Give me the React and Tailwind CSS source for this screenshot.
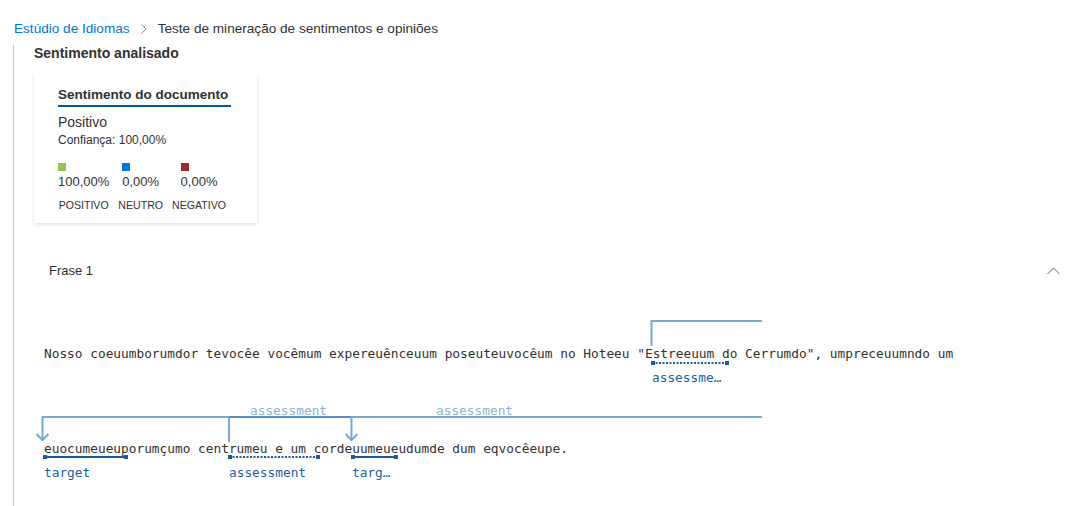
import React from 'react';

const ui = { fontFamily: '"Segoe UI", "Liberation Sans", Arial, sans-serif' };
const mono = { fontFamily: '"DejaVu Sans Mono", "Liberation Mono", monospace' };

// underline with small square caps at both ends
const Mark = ({ x1, x2, y, dotted }) => (
  <g>
    <line
      x1={x1}
      x2={x2}
      y1={y}
      y2={y}
      stroke="#1c5a9c"
      strokeWidth="2"
      strokeDasharray={dotted ? '2 1.5' : undefined}
    />
    <rect x={x1 - 1} y={y - 2} width="4" height="4" fill="#1c5a9c" />
    <rect x={x2 - 3} y={y - 2} width="4" height="4" fill="#1c5a9c" />
  </g>
);

const Arrow = ({ x, y1, y2 }) => (
  <g stroke="#7aa6d2" strokeWidth="2" fill="none">
    <line x1={x} x2={x} y1={y1} y2={y2} />
    <polyline points={`${x - 6},${y2 - 6} ${x},${y2} ${x + 6},${y2 - 6}`} />
  </g>
);

const Legend = ({ color, value, label }) => (
  <div className="flex flex-col items-center">
    <div className="flex flex-col">
      <span className={`w-2 h-2 ${color}`} />
      <span className="text-[13px] leading-5 mt-[1px] text-[#323130]">{value}</span>
    </div>
    <span className="text-[10.6px] leading-4 mt-[5px] text-[#323130]">{label}</span>
  </div>
);

const Diagram = () => (
  <div className="relative mt-[19px] h-[206px]" style={mono}>
    <div className="pl-[10px] pt-[46px] text-[12.8px] leading-4 text-[#323130] whitespace-pre">
      Nosso coeuumborumdor tevocêe vocêmum expereuênceuum poseuteuvocêum no Hoteeu "Estreeuum do Cerrumdo", umpreceuumndo um
    </div>
    <div className="pl-[10px] mt-[79px] text-[12.8px] leading-4 text-[#323130] whitespace-pre">
      euocumeueuporumçumo centrumeu e um cordeuumeueudumde dum eqvocêeupe.
    </div>

    {/* relation arcs laid over the sentence */}
    <svg className="absolute left-0 top-0" width="760" height="206">
      <g stroke="#7aa6d2" strokeWidth="2" fill="none">
        <polyline points="617.5,46 617.5,21 728,21" />
        <line x1="8" x2="728" y1="117" y2="117" />
        <line x1="195" x2="195" y1="117" y2="142" />
      </g>
      <line x1="195" x2="317" y1="117" y2="117" stroke="#5b8fc4" strokeWidth="2" />
      <Arrow x={8.5} y1={117} y2={140} />
      <Arrow x={317.5} y1={117} y2={140} />

      <g fontSize="12.8" fill="#8db3da" style={mono}>
        <text x="216" y="115">assessment</text>
        <text x="402" y="115">assessment</text>
      </g>

      <Mark x1={618} x2={694} y={63} dotted />
      <Mark x1={10} x2={93} y={157} />
      <Mark x1={195} x2={285} y={157} dotted />
      <Mark x1={318} x2={363} y={157} />

      <g fontSize="12.8" fill="#1c5fa3" style={mono}>
        <text x="618" y="82">assessme…</text>
        <text x="10" y="176.5">target</text>
        <text x="195" y="176.5">assessment</text>
        <text x="318" y="176.5">targ…</text>
      </g>
    </svg>
  </div>
);

export default function App() {
  return (
    <div className="w-[1088px] h-[506px] overflow-hidden bg-white text-[#323130]" style={ui}>
      {/* breadcrumb */}
      <div className="flex items-center pt-[19px] pl-[14px] text-[13.6px] leading-5">
        <span className="text-[#0078d4]">Estúdio de Idiomas</span>
        <svg className="mx-[10px]" width="8" height="12" viewBox="0 0 8 12">
          <polyline points="1.5,1.5 6,6 1.5,10.5" fill="none" stroke="#8a8886" strokeWidth="1" />
        </svg>
        <span>Teste de mineração de sentimentos e opiniões</span>
      </div>

      <div className="ml-[13px] mt-[6px] border-l border-[#c8c6c4] pl-[20px] h-[470px]">
        <div className="text-[14px] leading-4 font-semibold">Sentimento analisado</div>

        {/* document sentiment card */}
        <div className="mt-[11px] w-[223px] h-[151px] bg-white pl-[24px] pt-[10px] shadow-[0_1.6px_3.6px_rgba(0,0,0,0.13),0_0.3px_0.9px_rgba(0,0,0,0.11)]">
          <div className="inline-block text-[13.5px] leading-[18px] pb-[1px] font-semibold border-b-2 border-[#005a9e] pr-[3px]">
            Sentimento do documento
          </div>
          <div className="text-[14px] leading-5 mt-[5px]">Positivo</div>
          <div className="text-[12px] leading-4">Confiança: 100,00%</div>
          <div className="flex gap-[9px] mt-[15px]">
            <Legend color="bg-[#92c353]" value="100,00%" label="POSITIVO" />
            <Legend color="bg-[#0078d4]" value="0,00%" label="NEUTRO" />
            <Legend color="bg-[#a4262c]" value="0,00%" label="NEGATIVO" />
          </div>
        </div>

        {/* sentence header */}
        <div className="flex items-center justify-between mt-[38px] pl-[15px] pr-[28px] h-5">
          <span className="text-[13px]">Frase 1</span>
          <svg width="13" height="8" viewBox="0 0 13 8">
            <polyline points="0.5,7 6.5,1 12.5,7" fill="none" stroke="#605e5c" strokeWidth="1" />
          </svg>
        </div>

        <Diagram />
      </div>
    </div>
  );
}
